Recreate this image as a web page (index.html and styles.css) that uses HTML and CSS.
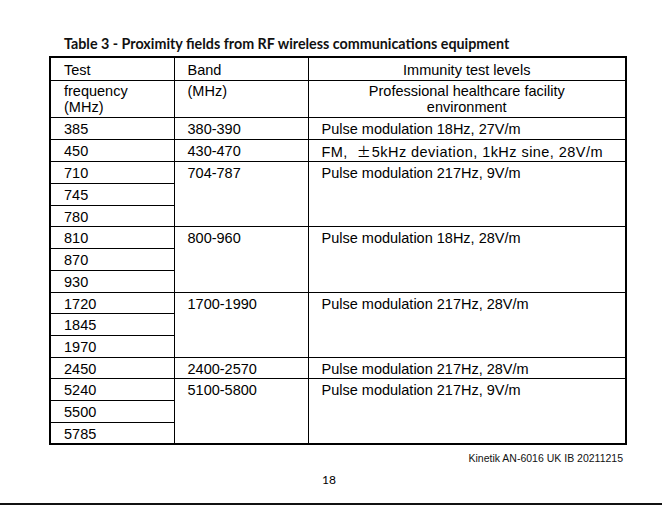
FILE: index.html
```html
<!DOCTYPE html>
<html>
<head>
<meta charset="utf-8">
<link rel="stylesheet" href="styles.css">
</head>
<body>
<div class="page">
  <h1 class="title">Table 3 - Proximity fields from RF wireless communications equipment</h1>
  <table class="rf">
    <colgroup>
      <col class="c1"><col class="c2"><col class="c3">
    </colgroup>
    <tr class="h1"><td>Test</td><td>Band</td><td class="center">Immunity test levels</td></tr>
    <tr class="h2"><td>frequency<br>(MHz)</td><td>(MHz)</td><td class="center">Professional healthcare facility<br>environment</td></tr>
    <tr><td>385</td><td>380-390</td><td>Pulse modulation 18Hz, 27V/m</td></tr>
    <tr><td>450</td><td>430-470</td><td class="wide">FM,&nbsp; <span class="pm">±</span>5kHz deviation, 1kHz sine, 28V/m</td></tr>
    <tr><td>710</td><td rowspan="3">704-787</td><td rowspan="3">Pulse modulation 217Hz, 9V/m</td></tr>
    <tr><td>745</td></tr>
    <tr><td>780</td></tr>
    <tr><td>810</td><td rowspan="3">800-960</td><td rowspan="3">Pulse modulation 18Hz, 28V/m</td></tr>
    <tr><td>870</td></tr>
    <tr><td>930</td></tr>
    <tr><td>1720</td><td rowspan="3">1700-1990</td><td rowspan="3">Pulse modulation 217Hz, 28V/m</td></tr>
    <tr><td>1845</td></tr>
    <tr><td>1970</td></tr>
    <tr><td>2450</td><td>2400-2570</td><td>Pulse modulation 217Hz, 28V/m</td></tr>
    <tr><td>5240</td><td rowspan="3">5100-5800</td><td rowspan="3">Pulse modulation 217Hz, 9V/m</td></tr>
    <tr><td>5500</td></tr>
    <tr><td>5785</td></tr>
  </table>
  <div class="doc-ref">Kinetik AN-6016 UK IB 20211215</div>
  <div class="page-num">18</div>
</div>
<div class="rule"></div>
</body>
</html>
```

FILE: styles.css
```css
html, body {
  margin: 0;
  padding: 0;
  background: #fff;
}
.page {
  width: 662px;
  height: 503px;
  padding-top: 35px;
  box-sizing: border-box;
  font-family: "Liberation Sans", Arial, sans-serif;
  color: #000;
}
.title {
  margin: 0 0 3px 64px;
  font-family: Lato, "Open Sans", sans-serif;
  font-weight: 700;
  font-size: 14.3px;
  line-height: 18px;
  color: #111;
}
.rf {
  margin-left: 49px;
  width: 576px;
  border-collapse: collapse;
  border: 2px solid #000;
  font-size: 14.5px;
  line-height: 16px;
  table-layout: fixed;
}
.c1 { width: 124px; }
.c2 { width: 134px; }
.c3 { width: 318px; }
.rf td {
  border: 1px solid #000;
  padding: 3px 0 1.7px 13px;
  height: 16px;
  vertical-align: top;
  white-space: nowrap;
}
.rf td.center {
  text-align: center;
  padding-left: 0;
}
.rf td.wide {
  letter-spacing: 0.45px;
}
.rf .h1 td { padding-top: 4px; padding-bottom: 2px; }
.rf .h2 td { padding-top: 2px; padding-bottom: 2px; }
.pm {
  font-family: "Noto Sans CJK SC", sans-serif;
  font-size: 14px;
  letter-spacing: 1px;
}
.doc-ref {
  width: 623px;
  text-align: right;
  font-size: 10.5px;
  line-height: 12px;
  margin-top: 7px;
  color: #111;
}
.page-num {
  text-align: center;
  font-family: Lato, "Open Sans", sans-serif;
  font-size: 12px;
  line-height: 14px;
  margin-top: 9px;
  padding-right: 4px;
}
.rule {
  height: 2px;
  background: #111;
  width: 662px;
}
```
